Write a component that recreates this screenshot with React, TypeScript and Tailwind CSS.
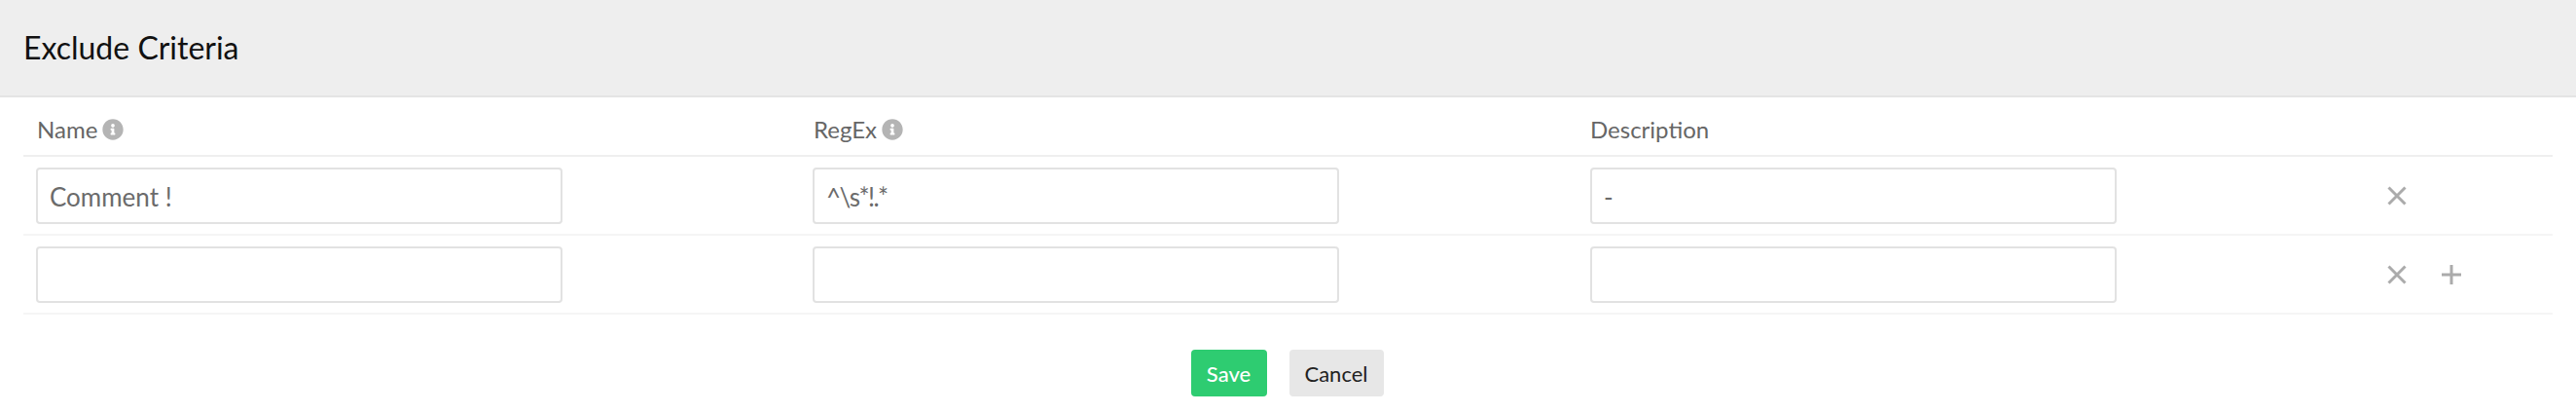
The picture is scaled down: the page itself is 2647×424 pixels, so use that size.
import { FaInfoCircle } from "react-icons/fa";

const rows = [
  { name: "Comment !", regex: "^\\s*!.*", description: "-", canAdd: false },
  { name: "", regex: "", description: "", canAdd: true },
];

const inputClass =
  "h-[58px] w-[541px] rounded-[4px] border-2 border-[#e2e2e2] bg-white px-[12px] pt-[2px] text-[26px] text-[#6b6b6b] outline-none";

const CloseIcon = () => (
  <svg width="20" height="20" viewBox="0 0 20 20" fill="none" stroke="#ababab" strokeWidth="3">
    <path d="M1.5 1.5 18.5 18.5M18.5 1.5 1.5 18.5" />
  </svg>
);

const PlusIcon = () => (
  <svg width="20" height="20" viewBox="0 0 20 20" fill="none" stroke="#ababab" strokeWidth="3">
    <path d="M10 0V20M0 10H20" />
  </svg>
);

const App = () => {
  return (
    <div className="flex h-[424px] w-[2647px] flex-col overflow-hidden bg-white font-['Lato','Open_Sans',sans-serif]">
      <header className="flex h-[100px] shrink-0 items-center border-b-2 border-[#e4e4e4] bg-[#eeeeee] px-[24px]">
        <h1 className="text-[32px] font-normal text-[#111111]">Exclude Criteria</h1>
      </header>

      <div className="mx-[24px] grid h-[61px] grid-cols-[798px_798px_1fr] items-center border-b-2 border-[#efefef] pt-[6px] pl-[14px] text-[24px] text-[#666666]">
        <div className="flex items-center gap-[5px]">
          Name <FaInfoCircle size={22} color="#b4b4b4" />
        </div>
        <div className="flex items-center gap-[5px]">
          RegEx <FaInfoCircle size={22} color="#b4b4b4" />
        </div>
        <div>Description</div>
      </div>

      {rows.map((row, i) => (
        <div
          key={i}
          className="mx-[24px] grid h-[81px] grid-cols-[798px_799px_797px_1fr] items-center border-b-2 border-[#f5f5f5] pl-[13px]"
        >
          <input className={inputClass} defaultValue={row.name} />
          <input className={`${inputClass} tracking-[-1.5px]`} defaultValue={row.regex} />
          <input className={inputClass} defaultValue={row.description} />
          <div className="flex items-center gap-[36px] pl-[22px]">
            <CloseIcon />
            {row.canAdd && <PlusIcon />}
          </div>
        </div>
      ))}

      <div className="mt-[36px] flex justify-center gap-[23px] pr-[2px]">
        <button className="h-[48px] w-[78px] rounded-[4px] bg-[#2ecc71] text-[22px] font-medium text-white">
          Save
        </button>
        <button className="h-[48px] w-[97px] rounded-[4px] bg-[#e7e7e7] text-[22px] text-[#222222]">
          Cancel
        </button>
      </div>
    </div>
  );
};

export default App;
